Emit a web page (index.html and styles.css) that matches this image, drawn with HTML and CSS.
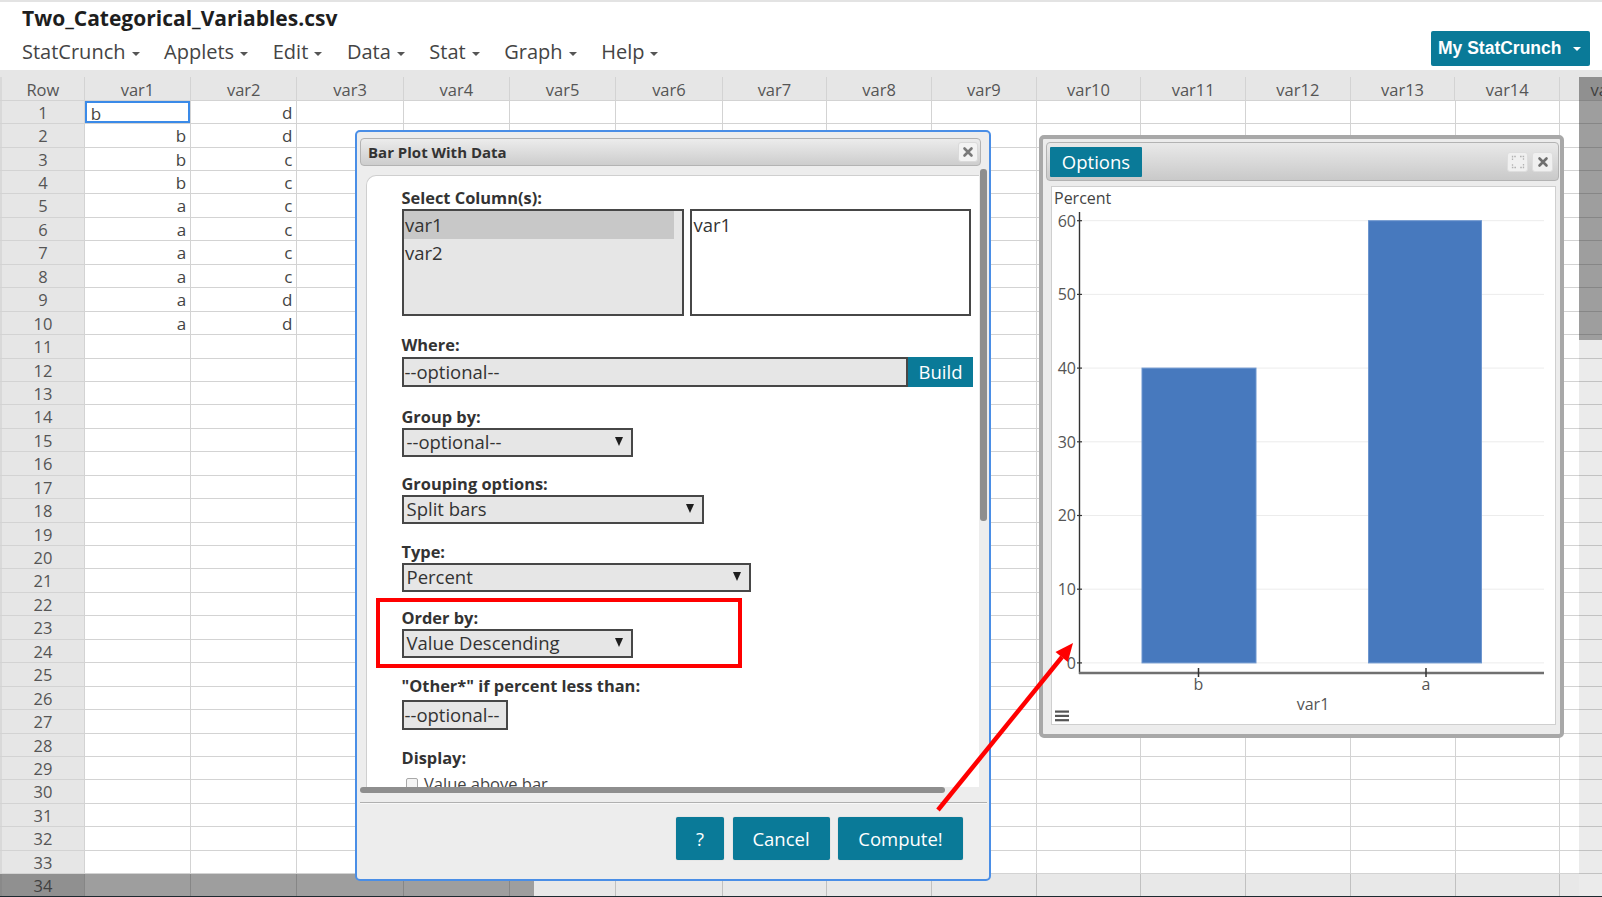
FILE: index.html
```html
<!DOCTYPE html>
<html>
<head>
<meta charset="utf-8">
<title>StatCrunch</title>
<link rel="stylesheet" href="styles.css">
</head>
<body>
<div class="app">
  <header class="topbar">
    <div class="brand">
      <div class="doc-title">Two_Categorical_Variables.csv</div>
      <nav class="menu">
        <span class="menu-item">StatCrunch<i class="caret"></i></span>
        <span class="menu-item">Applets<i class="caret"></i></span>
        <span class="menu-item">Edit<i class="caret"></i></span>
        <span class="menu-item">Data<i class="caret"></i></span>
        <span class="menu-item">Stat<i class="caret"></i></span>
        <span class="menu-item">Graph<i class="caret"></i></span>
        <span class="menu-item">Help<i class="caret"></i></span>
      </nav>
    </div>
    <button class="my-btn">My StatCrunch<i class="caret caret-white"></i></button>
  </header>
  <div class="strip"></div>

  <div class="sheet">
    <div class="srow head"><div class="rh">Row</div><div class="c cw">var1</div><div class="c cw">var2</div><div class="c cw">var3</div><div class="c cw">var4</div><div class="c cw">var5</div><div class="c cw">var6</div><div class="c">var7</div><div class="c">var8</div><div class="c">var9</div><div class="c">var10</div><div class="c">var11</div><div class="c">var12</div><div class="c">var13</div><div class="c">var14</div><div class="c">var15</div></div>
    <div class="srow"><div class="rh">1</div><div class="c cw sel">b</div><div class="c cw">d</div></div>
    <div class="srow"><div class="rh">2</div><div class="c cw">b</div><div class="c cw">d</div></div>
    <div class="srow"><div class="rh">3</div><div class="c cw">b</div><div class="c cw">c</div></div>
    <div class="srow"><div class="rh">4</div><div class="c cw">b</div><div class="c cw">c</div></div>
    <div class="srow"><div class="rh">5</div><div class="c cw">a</div><div class="c cw">c</div></div>
    <div class="srow"><div class="rh">6</div><div class="c cw">a</div><div class="c cw">c</div></div>
    <div class="srow"><div class="rh">7</div><div class="c cw">a</div><div class="c cw">c</div></div>
    <div class="srow"><div class="rh">8</div><div class="c cw">a</div><div class="c cw">c</div></div>
    <div class="srow"><div class="rh">9</div><div class="c cw">a</div><div class="c cw">d</div></div>
    <div class="srow"><div class="rh">10</div><div class="c cw">a</div><div class="c cw">d</div></div>
    <div class="srow"><div class="rh">11</div></div>
    <div class="srow"><div class="rh">12</div></div>
    <div class="srow"><div class="rh">13</div></div>
    <div class="srow"><div class="rh">14</div></div>
    <div class="srow"><div class="rh">15</div></div>
    <div class="srow"><div class="rh">16</div></div>
    <div class="srow"><div class="rh">17</div></div>
    <div class="srow"><div class="rh">18</div></div>
    <div class="srow"><div class="rh">19</div></div>
    <div class="srow"><div class="rh">20</div></div>
    <div class="srow"><div class="rh">21</div></div>
    <div class="srow"><div class="rh">22</div></div>
    <div class="srow"><div class="rh">23</div></div>
    <div class="srow"><div class="rh">24</div></div>
    <div class="srow"><div class="rh">25</div></div>
    <div class="srow"><div class="rh">26</div></div>
    <div class="srow"><div class="rh">27</div></div>
    <div class="srow"><div class="rh">28</div></div>
    <div class="srow"><div class="rh">29</div></div>
    <div class="srow"><div class="rh">30</div></div>
    <div class="srow"><div class="rh">31</div></div>
    <div class="srow"><div class="rh">32</div></div>
    <div class="srow"><div class="rh">33</div></div>
    <div class="srow"><div class="rh">34</div></div>
  </div>

  <div class="page-vtrack"></div>
  <div class="page-vthumb"></div>
  <div class="page-htrack"></div>
  <div class="page-hthumb"></div>
  <div class="page-bottomline"></div>

  <section class="dialog">
    <div class="dlg-title">
      <span class="dlg-title-text">Bar Plot With Data</span>
      <span class="xbtn"><svg width="12" height="12" viewBox="0 0 12 12"><path d="M2.5 2.5L9.5 9.5M9.5 2.5L2.5 9.5" stroke="#7a7a7a" stroke-width="2.6" stroke-linecap="round"/></svg></span>
    </div>
    <div class="dlg-scroll">
      <div class="dlg-panel">
        <div class="field f-cols">
          <div class="lbl">Select Column(s):</div>
          <div class="lists">
            <div class="listbox src"><div class="opt on">var1</div><div class="opt">var2</div></div>
            <div class="listbox dst"><div class="opt">var1</div></div>
          </div>
        </div>
        <div class="field f-where">
          <div class="lbl">Where:</div>
          <div class="where">
            <div class="inp inp-where">--optional--</div>
            <div class="build">Build</div>
          </div>
        </div>
        <div class="field f-group">
          <div class="lbl">Group by:</div>
          <div class="selbox w-sm">--optional--</div>
        </div>
        <div class="field f-gopts">
          <div class="lbl">Grouping options:</div>
          <div class="selbox w-md">Split bars</div>
        </div>
        <div class="field f-type">
          <div class="lbl">Type:</div>
          <div class="selbox w-lg">Percent</div>
        </div>
        <div class="field hl">
          <div class="lbl">Order by:</div>
          <div class="selbox w-sm">Value Descending</div>
        </div>
        <div class="field f-other">
          <div class="lbl">"Other*" if percent less than:</div>
          <div class="inp inp-other">--optional--</div>
        </div>
        <div class="field f-display">
          <div class="lbl">Display:</div>
          <label class="chk"><span class="box"></span>Value above bar</label>
        </div>
      </div>
      <div class="dlg-vthumb"></div>
      <div class="dlg-hthumb"></div>
    </div>
    <div class="dlg-sep"></div>
    <div class="dlg-actions">
      <button class="tbtn b-help">?</button>
      <button class="tbtn b-cancel">Cancel</button>
      <button class="tbtn b-compute">Compute!</button>
    </div>
  </section>

  <section class="graph-win">
    <div class="gw-title">
      <span class="opt-btn">Options</span>
      <span class="gw-icons">
        <span class="ibtn"><svg width="14" height="14" viewBox="0 0 14 14"><path d="M1.5 5V1.5H5M9 1.5h3.5V5M12.5 9v3.5H9M5 12.5H1.5V9" fill="none" stroke="#b3b3b3" stroke-width="1.3" stroke-dasharray="1.6 1"/></svg></span>
        <span class="ibtn"><svg width="12" height="12" viewBox="0 0 12 12"><path d="M2.5 2.5L9.5 9.5M9.5 2.5L2.5 9.5" stroke="#6f6f6f" stroke-width="2.6" stroke-linecap="round"/></svg></span>
      </span>
    </div>
    <div class="plot">
      <svg class="chart" width="503" height="537" viewBox="0 0 503 537">
        <text x="2" y="17" class="ax">Percent</text>
        <g stroke="#ececec" stroke-width="1">
          <line x1="28" y1="33.7" x2="492" y2="33.7"/>
          <line x1="28" y1="107.4" x2="492" y2="107.4"/>
          <line x1="28" y1="181.1" x2="492" y2="181.1"/>
          <line x1="28" y1="254.8" x2="492" y2="254.8"/>
          <line x1="28" y1="328.5" x2="492" y2="328.5"/>
          <line x1="28" y1="402.2" x2="492" y2="402.2"/>
          <line x1="28" y1="475.9" x2="492" y2="475.9"/>
        </g>
        <rect x="90" y="181.1" width="114" height="294.8" fill="#4779be" stroke="#6d96cf" stroke-width="1"/>
        <rect x="316.5" y="33.7" width="113" height="442.2" fill="#4779be" stroke="#6d96cf" stroke-width="1"/>
        <line x1="27.5" y1="25" x2="27.5" y2="487" stroke="#333" stroke-width="1.4"/>
        <g stroke="#333" stroke-width="1.2">
          <line x1="25" y1="33.7" x2="30" y2="33.7"/>
          <line x1="25" y1="107.4" x2="30" y2="107.4"/>
          <line x1="25" y1="181.1" x2="30" y2="181.1"/>
          <line x1="25" y1="254.8" x2="30" y2="254.8"/>
          <line x1="25" y1="328.5" x2="30" y2="328.5"/>
          <line x1="25" y1="402.2" x2="30" y2="402.2"/>
          <line x1="25" y1="475.9" x2="30" y2="475.9"/>
        </g>
        <g class="tick" text-anchor="end">
          <text x="24" y="39.5">60</text>
          <text x="24" y="113.2">50</text>
          <text x="24" y="186.9">40</text>
          <text x="24" y="260.6">30</text>
          <text x="24" y="334.3">20</text>
          <text x="24" y="408">10</text>
          <text x="24" y="481.7">0</text>
        </g>
        <line x1="27" y1="486" x2="492" y2="486" stroke="#707070" stroke-width="2.6"/>
        <g stroke="#333" stroke-width="1.5">
          <line x1="146.5" y1="481" x2="146.5" y2="490"/>
          <line x1="374" y1="481" x2="374" y2="490"/>
        </g>
        <g class="tick" text-anchor="middle">
          <text x="146.5" y="503">b</text>
          <text x="374" y="503">a</text>
          <text x="261" y="523">var1</text>
        </g>
        <g fill="#555">
          <rect x="3" y="523.5" width="14" height="2.2"/>
          <rect x="3" y="527.8" width="14" height="2.2"/>
          <rect x="3" y="532.1" width="14" height="2.2"/>
        </g>
      </svg>
    </div>
  </section>

  <svg class="annot" width="1602" height="897" viewBox="0 0 1602 897">
    <line x1="938" y1="810" x2="1062" y2="657" stroke="#ff0000" stroke-width="4.5"/>
    <polygon points="1073,643 1067.8,662 1055.5,652" fill="#ff0000"/>
  </svg>
</div>
</body>
</html>
```
FILE: styles.css
```css
* { box-sizing: border-box; margin: 0; padding: 0; }
html, body { width: 1602px; height: 897px; overflow: hidden; background: #fff; }
body { font-family: "Open Sans", "Noto Sans", "DejaVu Sans", sans-serif; color: #333; }
.app { position: relative; width: 1602px; height: 897px; overflow: hidden; }

/* top bar */
.topbar { height: 70px; border-top: 2px solid #e3e3e3; display: flex; justify-content: space-between; align-items: flex-start; padding: 0 12px 0 22px; }
.doc-title { font-weight: 700; font-size: 21px; line-height: 26px; color: #1e1e1e; margin-top: 3px; }
.menu { display: flex; gap: 24.6px; margin-top: 8px; font-size: 20px; line-height: 26px; color: #444; }
.menu-item { display: flex; align-items: center; }
.caret { display: inline-block; width: 0; height: 0; border-left: 4px solid transparent; border-right: 4px solid transparent; border-top: 4px solid #555; margin-left: 6px; margin-top: 3px; }
.caret-white { border-top-color: #fff; margin-left: 12px; margin-top: 1px; }
.my-btn { margin-top: 28.6px; height: 35px; width: 159px; background: #0a7a98; color: #fff; border: none; border-radius: 2px; font-family: "Liberation Sans", Arial, sans-serif; font-weight: 700; font-size: 17.5px; display: flex; align-items: center; padding-left: 7px; }
.strip { height: 7.3px; background: #e6e6e6; }

/* spreadsheet: vertical grid lines are drawn on the sheet background */
.sheet {
  font-size: 16.5px; color: #555; background-color: #fff;
  background-image:
    linear-gradient(#d3d3d3, #d3d3d3), linear-gradient(#d3d3d3, #d3d3d3), linear-gradient(#d3d3d3, #d3d3d3),
    linear-gradient(#d3d3d3, #d3d3d3), linear-gradient(#d3d3d3, #d3d3d3), linear-gradient(#d3d3d3, #d3d3d3),
    linear-gradient(#d3d3d3, #d3d3d3), linear-gradient(#d3d3d3, #d3d3d3), linear-gradient(#d3d3d3, #d3d3d3),
    linear-gradient(#d3d3d3, #d3d3d3), linear-gradient(#d3d3d3, #d3d3d3), linear-gradient(#d3d3d3, #d3d3d3),
    linear-gradient(#d3d3d3, #d3d3d3), linear-gradient(#d3d3d3, #d3d3d3);
  background-size: 1px 100%;
  background-repeat: no-repeat;
  background-position: 190.1px 0, 296.4px 0, 402.7px 0, 509px 0, 615.3px 0, 721.6px 0, 826.3px 0,
    931px 0, 1035.7px 0, 1140.4px 0, 1245.1px 0, 1349.8px 0, 1454.5px 0, 1559.2px 0;
}
.srow { display: flex; height: 23.44px; border-bottom: 1px solid #d3d3d3; overflow: hidden; white-space: nowrap; }
.rh { flex: 0 0 84.8px; background: #e6e6e6; border-left: 2px solid #d9d9d9; border-right: 1px solid #d3d3d3; text-align: center; line-height: 22.44px; padding-top: 1px; }
.c { flex: 0 0 104.7px; border-right: 1px solid #d3d3d3; line-height: 22.44px; text-align: right; padding: 1px 4px 0 0; font-size: 17px; color: #444; background: #fff; }
.cw { flex-basis: 106.3px; }
.head .c { text-align: center; background: #e6e6e6; font-size: 16.5px; color: #555; padding: 1.5px 0 0; }
.head .rh { padding-top: 1.5px; }
.sel { text-align: left; padding-left: 6px; box-shadow: inset 0 0 0 2px #3a8ae8; line-height: 26px; padding-top: 0; }

/* page scrollbars */
.page-vtrack { position: absolute; left: 1579px; top: 340px; width: 23px; height: 557px; background: rgba(0,0,0,0.08); }
.page-vthumb { position: absolute; left: 1579px; top: 77.3px; width: 23px; height: 263px; background: rgba(40,40,40,0.45); }
.page-htrack { position: absolute; left: 534px; top: 874.3px; width: 1045px; height: 23px; background: rgba(0,0,0,0.09); }
.page-hthumb { position: absolute; left: 0; top: 874.3px; width: 534px; height: 23px; background: rgba(40,40,40,0.45); }
.page-bottomline { position: absolute; left: 0; top: 896px; width: 1602px; height: 1px; background: #1d2a30; }

/* dialog */
.dialog { position: absolute; left: 355px; top: 130px; width: 636px; height: 751px; border: 2px solid #4a8ee6; border-radius: 5px; background: #ededed; display: flex; flex-direction: column; z-index: 5; }
.dlg-title { margin: 6px 8px 0 3px; height: 28px; flex: 0 0 28px; border: 1px solid #b3b3b3; border-radius: 4px; background: linear-gradient(#ececec, #cdcdcd); display: flex; align-items: center; justify-content: space-between; padding: 0 2px 0 7px; }
.dlg-title-text { font-weight: 700; font-size: 15px; color: #333; }
.xbtn { width: 20px; height: 20px; background: #f3f3f3; border: 1px solid #dadada; border-radius: 3px; display: flex; align-items: center; justify-content: center; }
.dlg-scroll { position: relative; margin: 2px 2px 0 3px; height: 626px; flex: 0 0 626px; padding: 7px 8px 0 6px; overflow: hidden; }
.dlg-panel { height: 612px; background: #fff; border-top: 1px solid #cfcfcf; border-left: 1px solid #cfcfcf; border-top-left-radius: 10px; padding: 11px 0 0 34.5px; overflow: hidden; }
.dlg-vthumb { position: absolute; right: 0; top: 1px; width: 7px; height: 352px; background: #8e8e8e; border-radius: 3px; }
.dlg-hthumb { position: absolute; left: 0; bottom: 1px; width: 585px; height: 6px; background: #8e8e8e; border-radius: 3px; }
.dlg-sep { margin: 8px 2px 0 3px; height: 2px; flex: 0 0 2px; border-top: 1px solid #b0b0b0; border-bottom: 1px solid #f8f8f8; }
.dlg-actions { margin-top: 13px; display: flex; justify-content: flex-end; padding-right: 26px; gap: 8.5px; }
.tbtn { height: 43px; background: #0a7a98; color: #fff; border: none; border-radius: 2px; font-family: inherit; font-size: 18.5px; box-shadow: 0 0 1px rgba(0,0,0,0.3); }
.b-help { width: 48px; }
.b-cancel { width: 97px; }
.b-compute { width: 125px; }

/* form fields */
.lbl { font-weight: 700; font-size: 16.4px; line-height: 22px; height: 22px; color: #333; white-space: nowrap; }
.f-cols { margin-bottom: 18px; }
.f-where { margin-bottom: 19px; }
.f-group { margin-bottom: 16px; }
.f-gopts { margin-bottom: 17px; }
.f-type { margin-bottom: 6px; }
.f-other { margin-bottom: 17px; }
.lists { display: flex; gap: 6.5px; }
.listbox { height: 107px; border: 2px solid #474747; font-size: 18.5px; color: #333; }
.src { width: 282px; background: #e6e6e6; }
.dst { width: 281px; background: #fff; }
.opt { height: 27.5px; line-height: 27px; padding-left: 1.5px; margin-right: 7.5px; }
.opt.on { background: #c8c8c8; }
.where { display: flex; margin-top: 1px; height: 30px; }
.inp { height: 30px; border: 2px solid #474747; background: #e6e6e6; font-size: 18.5px; line-height: 25px; padding-left: 1px; color: #333; }
.inp-where { width: 506.5px; }
.build { width: 65px; height: 30px; background: #0a7a98; color: #fff; font-size: 18.5px; line-height: 29px; text-align: center; }
.inp-other { width: 106.5px; margin-top: 3px; }
.selbox { position: relative; height: 29px; border: 2px solid #474747; background: #e6e6e6; font-size: 18.5px; line-height: 24px; padding-left: 3px; color: #333; white-space: nowrap; }
.selbox::after { content: ""; position: absolute; right: 8px; top: 7px; width: 0; height: 0; border-left: 4.5px solid transparent; border-right: 4.5px solid transparent; border-top: 9px solid #1e1e1e; }
.w-sm { width: 231px; }
.w-md { width: 302.5px; }
.w-lg { width: 349.5px; }
.hl { width: 366px; margin: 0 0 7px -25.5px; padding: 5px 0 6px 21.5px; border: 4px solid #ff0000; }
.chk { display: flex; align-items: center; margin-top: 6px; margin-left: 4.5px; font-size: 16.5px; color: #444; gap: 6px; line-height: 18px; }
.chk .box { width: 12px; height: 12px; border: 1px solid #a8a8a8; background: #f4f4f4; border-radius: 2px; }

/* graph window */
.graph-win { position: absolute; left: 1039px; top: 135px; width: 525px; height: 603px; border: 4px solid #a8a8a8; border-radius: 5px; background: #ececec; padding: 3px 1px 0 3px; z-index: 4; }
.gw-title { height: 39px; border: 1px solid #b3b3b3; border-radius: 4px; background: linear-gradient(#e9e9e9, #c9c9c9); display: flex; align-items: center; justify-content: space-between; padding: 0 5px 0 3px; }
.opt-btn { width: 92px; height: 30px; background: #0a7a98; color: #fff; font-size: 18.5px; line-height: 29px; text-align: center; border-radius: 1px; }
.gw-icons { display: flex; gap: 4px; }
.ibtn { width: 21px; height: 20px; background: #f0f0f0; border: 1px solid #dedede; border-radius: 3px; display: flex; align-items: center; justify-content: center; }
.plot { margin: 6px 4px 0 6px; height: 537px; background: #fff; box-shadow: 0 0 0 1px #cfcfcf; }
.chart { display: block; font-family: "Open Sans", "Noto Sans", sans-serif; }
.chart .ax { font-size: 16px; fill: #444; }
.chart .tick { font-size: 16px; fill: #555; }

/* annotation */
.annot { position: absolute; left: 0; top: 0; z-index: 10; pointer-events: none; }
```
